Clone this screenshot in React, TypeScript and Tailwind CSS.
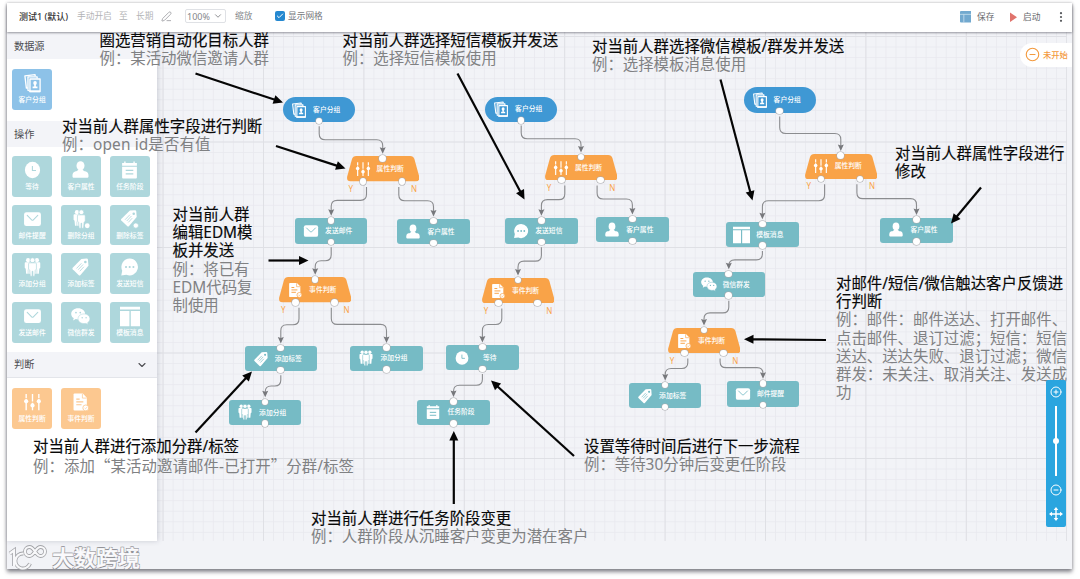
import React from "react";
import { ChevronDown, Check, PenLine, CirclePlus, CircleMinus } from "lucide-react";

type Kind = "pill" | "cond" | "act";
type IconName =
  | "group" | "sliders" | "mail" | "user" | "chat" | "event" | "tag" | "people"
  | "clock" | "task" | "template" | "wechat" | "peopleDel" | "tagDel";

function Person({ x, y, s = 1 }: { x: number; y: number; s?: number }) {
  return (
    <g transform={`translate(${x} ${y}) scale(${s})`}>
      <circle cx="0" cy="-6.300" r="2.200" />
      <path d="M-2.700 -4H2.700Q3.500 -3.800 3.500 -3V1.600L2.500 2.600L2 8H.3V3.500H-.3V8H-2L-2.500 2.600L-3.500 1.600V-3Q-3.500 -3.800 -2.700 -4Z" />
    </g>
  );
}

function Icon({ name, hole, className }: { name: IconName; hole: string; className: string }) {
  const shapes: Record<IconName, React.ReactNode> = {
    group: (
      <g fill="none" stroke="#fff" strokeWidth="1.250" strokeLinejoin="round">
        <path d="M4.600 13.600 3.200 13.800 1.800 2.200 11.400 1.100 11.600 2.400" />
        <path d="M6 16.200 4.700 15.900V3.200H13.400V4.800" />
        <rect x="6.600" y="5.200" width="9.600" height="11.900" />
        <path d="M6 16.800H16.200" strokeWidth="1.800" />
        <g fill="#fff" stroke="none">
          <ellipse cx="11.400" cy="9" rx="1.700" ry="1.900" />
          <path d="M10.600 10h1.600v2.200h1.500v1.700H9.100v-1.700h1.500z" />
        </g>
      </g>
    ),
    sliders: (
      <g>
        <path d="M3 1.400v3.800M3 6v10.800M9 1.400v7.200M9 9.600v7.200M15 1.400v3.800M15 6v10.800" stroke="#fff" strokeWidth="1.300" />
        <circle cx="3" cy="8.400" r="2" />
        <circle cx="9" cy="12.200" r="2" />
        <circle cx="15" cy="8.400" r="2" />
      </g>
    ),
    mail: (
      <g>
        <rect x="1" y="2.600" width="16" height="13" rx="2.200" />
        <path d="M4 5.600 8.400 10q.6.500 1.200 0L14 5.600" fill="none" stroke={hole} strokeWidth="1" strokeLinecap="round" />
      </g>
    ),
    user: (
      <g>
        <ellipse cx="9" cy="5" rx="3.800" ry="4.300" />
        <path d="M6.600 8.600h4.800c.2 1.400 1.300 1.500 2.800 1.900 1.800.6 2.400 2 2.400 4.200 0 1.400-.6 1.700-1.600 1.700H3c-1 0-1.600-.3-1.600-1.700 0-2.200.6-3.600 2.400-4.200 1.500-.4 2.600-.5 2.800-1.900z" />
      </g>
    ),
    chat: (
      <g>
        <path d="M9.200 1a7.800 8 0 1 1-3.200 15.300L1.200 17 2.100 12.500A7.800 8 0 0 1 9.200 1z" />
        <g fill={hole}><circle cx="5.700" cy="9" r="1" /><circle cx="9.200" cy="9" r="1" /><circle cx="12.700" cy="9" r="1" /></g>
      </g>
    ),
    event: (
      <g>
        <path d="M3.400 1h7.800l3.800 4v11a1 1 0 0 1-1 1H3.400a1 1 0 0 1-1-1V2a1 1 0 0 1 1-1z" />
        <path d="M10.800 1.300v4h4" fill="none" stroke={hole} strokeWidth="0.700" />
        <path d="M5 6.200h3.200M5 8.900h6.700M5 11.600h5" stroke={hole} strokeWidth="1.100" />
        <circle cx="14" cy="14.600" r="2.800" stroke={hole} strokeWidth="0.800" />
        <path d="M12.900 14.700l.9.8 1.400-1.700" fill="none" stroke={hole} strokeWidth="0.600" />
      </g>
    ),
    tag: (
      <g>
        <path d="M9.800 1.400 14.800 1Q16 1 16.100 2.200L16.500 7.800 8.800 16.800q-.7.600-1.400 0L1.600 11.200q-.6-.7 0-1.400z" />
        <circle cx="13.600" cy="4.300" r="1.200" fill={hole} />
        <path d="M5.200 10.400 9.900 5.500M6.800 11.600l4.700-5M8.300 13l3.900-4.200" stroke={hole} strokeWidth="0.750" />
      </g>
    ),
    people: (
      <g>
        <Person x={4.8} y={8.2} s={0.9} />
        <Person x={13.200} y={8.2} s={0.9} />
        <g stroke={hole} strokeWidth="0.600"><Person x={9} y={9.3} s={1.060} /></g>
      </g>
    ),
    clock: (
      <g>
        <ellipse cx="9" cy="9" rx="7.200" ry="7.700" />
        <path d="M8.900 5.200v4.200h3.400" fill="none" stroke={hole} strokeWidth="1" />
      </g>
    ),
    task: (
      <g>
        <path d="M2 5.900h14v10.200a.9.9 0 0 1-.9.9H2.900a.9.9 0 0 1-.9-.9z" />
        <path d="M2 4.900V2.400h2V1h1.300v1.400h7.400V1H14v1.400h2v2.500z" />
        <path d="M5.400 9.400h7.200M5.400 12.700h7.200" stroke={hole} strokeWidth="1.100" />
      </g>
    ),
    template: (
      <g>
        <path d="M0 .2h18v2.600H0zM0 4h8.500v13.800H0zM9.700 4H18v13.800H9.700z" />
      </g>
    ),
    wechat: (
      <g>
        <path d="M6.800 1.600C2.800 1.600.2 4 .2 7c0 1.800 1 3.100 2.400 4l-.6 2.200 2.500-1.300c.8.200 1.500.3 2.300.3 3.800 0 6.600-2.300 6.600-5.200S10.600 1.600 6.800 1.600z" />
        <path d="M12.400 7c-3.300 0-5.700 2-5.700 4.500s2.400 4.700 5.700 4.700c.6 0 1.200-.1 1.800-.2l2 1.100-.5-1.700c1.300-.8 2.200-2.200 2.200-3.900C17.900 9 15.600 7 12.400 7z" stroke={hole} strokeWidth="0.500" />
        <g fill={hole}><circle cx="4.700" cy="5.800" r=".8" /><circle cx="8.800" cy="5.800" r=".8" /><circle cx="10.600" cy="10.600" r=".7" /><circle cx="14.300" cy="10.600" r=".7" /></g>
      </g>
    ),
    peopleDel: (
      <g>
        <Person x={5.6} y={8.2} s={0.9} />
        <g stroke={hole} strokeWidth="0.600"><Person x={9.8} y={9.3} s={1.060} /></g>
        <circle cx="15.400" cy="15.400" r="2.300" />
      </g>
    ),
    tagDel: (
      <g>
        <path d="M9.400 1 14.200.7Q15.300.7 15.400 1.800L15.800 7.200 8.400 15.800q-.7.600-1.400 0L1.200 10.400q-.6-.7 0-1.400z" />
        <circle cx="13" cy="4" r="1.200" fill={hole} />
        <path d="M4.800 9.700 9.400 4.900M6.400 10.900l4.500-4.800M7.900 12.200l3.700-4" stroke={hole} strokeWidth="0.750" />
        <circle cx="15" cy="15.200" r="2.500" stroke={hole} strokeWidth="0.700" />
      </g>
    ),
  };
  return (
    <svg viewBox="0 0 18 18" fill="#fff" className={className}>
      {shapes[name]}
    </svg>
  );
}

type NodeData = { x: number; y: number; kind: Kind; icon: IconName; label: string };

const nodes: Record<string, NodeData> = {
  a1: { x: 283, y: 97.2, kind: "pill", icon: "group", label: "客户分组" },
  a2: { x: 346.5, y: 156.4, kind: "cond", icon: "sliders", label: "属性判断" },
  a3: { x: 295, y: 218.3, kind: "act", icon: "mail", label: "发送邮件" },
  a4: { x: 397.3, y: 219.2, kind: "act", icon: "user", label: "客户属性" },
  a5: { x: 279, y: 277.3, kind: "cond", icon: "event", label: "事件判断" },
  a6: { x: 244.6, y: 346.2, kind: "act", icon: "tag", label: "添加标签" },
  a7: { x: 350.3, y: 345.5, kind: "act", icon: "people", label: "添加分组" },
  a8: { x: 229, y: 399.8, kind: "act", icon: "people", label: "添加分组" },
  b1: { x: 485, y: 96.5, kind: "pill", icon: "group", label: "客户分组" },
  b2: { x: 544.8, y: 155, kind: "cond", icon: "sliders", label: "属性判断" },
  b3: { x: 505.2, y: 218.3, kind: "act", icon: "chat", label: "发送短信" },
  b4: { x: 596.2, y: 217, kind: "act", icon: "user", label: "客户属性" },
  b5: { x: 481.8, y: 278, kind: "cond", icon: "event", label: "事件判断" },
  b6: { x: 446.2, y: 345, kind: "act", icon: "clock", label: "等待" },
  b7: { x: 417.3, y: 399.6, kind: "act", icon: "task", label: "任务阶段" },
  c1: { x: 743.5, y: 87.4, kind: "pill", icon: "group", label: "客户分组" },
  c2: { x: 804.6, y: 153.7, kind: "cond", icon: "sliders", label: "属性判断" },
  c3: { x: 726.2, y: 221.9, kind: "act", icon: "template", label: "模板消息" },
  c4: { x: 880.3, y: 217.6, kind: "act", icon: "user", label: "客户属性" },
  c5: { x: 692.6, y: 271.8, kind: "act", icon: "wechat", label: "微信群发" },
  c6: { x: 667.8, y: 328, kind: "cond", icon: "event", label: "事件判断" },
  c7: { x: 629, y: 383, kind: "act", icon: "tag", label: "添加标签" },
  c8: { x: 726.8, y: 381.3, kind: "act", icon: "mail", label: "邮件提醒" },
};

const edges: [string, string, ("Y" | "N")?][] = [
  ["a1", "a2"], ["a2", "a3", "Y"], ["a2", "a4", "N"], ["a3", "a5"],
  ["a5", "a6", "Y"], ["a5", "a7", "N"], ["a6", "a8"],
  ["b1", "b2"], ["b2", "b3", "Y"], ["b2", "b4", "N"], ["b3", "b5"], ["b5", "b6", "Y"], ["b6", "b7"],
  ["c1", "c2"], ["c2", "c3", "Y"], ["c2", "c4", "N"], ["c3", "c5"], ["c5", "c6"],
  ["c6", "c7", "Y"], ["c6", "c8", "N"],
];

function Edge({ from, to, branch }: { from: NodeData; to: NodeData; branch?: "Y" | "N" }) {
  const sx = from.x + (branch === "Y" ? 20 : branch === "N" ? 52.3 : 36.2);
  const py = from.y + 24;
  const sy = branch ? from.y + 30.5 : py + 5;
  const tx = to.x + 36.2;
  const ty = to.y - 2.6;
  const my = (py + to.y + 2) / 2;
  const d = tx > sx ? 1 : -1;
  const r = Math.min(6, (ty - sy) / 2);
  return (
    <g>
      <path
        d={`M${sx} ${sy}V${my - r}Q${sx} ${my} ${sx + r * d} ${my}H${tx - r * d}Q${tx} ${my} ${tx} ${my + r}V${ty - 3}`}
        fill="none" stroke="#8b8c8f" strokeWidth="1.1"
      />
      <path d={`M${tx} ${ty}L${tx - 3} ${ty - 6.5}L${tx} ${ty - 5.5}L${tx + 3} ${ty - 6.5}Z`} fill="#77787c" />
    </g>
  );
}

const kindColor: Record<Kind, string> = { pill: "#3f98d4", cond: "#f9a348", act: "#76bbc5" };

function Port({ className }: { className: string }) {
  return <span className={`absolute size-[6.600px] rounded-full bg-white shadow-[0_0_0_0.6px_#a9aaad] ${className}`} />;
}

function FlowNode({ node }: { node: NodeData }) {
  const bg = node.kind === "pill" ? "rounded-full bg-[#3f98d4]" : node.kind === "act" ? "rounded-[3px] bg-[#76bbc5]" : "";
  return (
    <div
      className={`absolute flex h-[25.300px] w-[72.400px] items-center ${bg}`}
      style={{ left: node.x, top: node.y }}
    >
      {node.kind === "cond" && (
        <svg viewBox="0 0 72.4 25.3" className="absolute inset-0 h-full w-full">
          <path d="M9.200 0H63.200Q66.400 0 67.400 3L72.200 20.500Q73 25.300 69 25.300H3.400Q-.6 25.300.2 20.500L5 3Q6 0 9.200 0Z" fill="#f9a348" />
        </svg>
      )}
      <Icon
        name={node.icon}
        hole={kindColor[node.kind]}
        className={node.icon === "template" ? "relative ml-[7px] h-[18px] w-[17px]" : "relative ml-2 size-4"}
      />
      <span className="relative flex-1 whitespace-nowrap pl-[3px] pr-3 pt-px text-center text-[6.800px] font-medium leading-none text-white">
        {node.label}
      </span>
      {node.kind !== "pill" && <Port className="left-[32.900px] -top-[1.300px]" />}
      {node.kind === "cond" ? (
        <>
          <Port className="left-[13.200px] top-[21.900px]" />
          <Port className="left-[52.200px] top-[21.900px]" />
          <span className="absolute left-[2px] top-[27.500px] text-[8px] leading-[9px] text-[#f9a348]">Y</span>
          <span className="absolute left-[64.500px] top-[27.500px] text-[8px] leading-[9px] text-[#f9a348]">N</span>
        </>
      ) : (
        <Port className="left-[32.900px] top-[20.500px]" />
      )}
    </div>
  );
}

const tileColor = { blue: "bg-[#8dc2e8]", teal: "bg-[#aed7dc]", orange: "bg-[#fcc890]" };
const tileHole = { blue: "#8dc2e8", teal: "#aed7dc", orange: "#fcc890" };

function Tile({ icon, label, tone }: { icon: IconName; label: string; tone: "blue" | "teal" | "orange" }) {
  return (
    <div className={`flex h-[40.700px] w-[40.200px] flex-col items-center rounded-[3px] pt-1 ${tileColor[tone]}`}>
      <Icon name={icon} hole={tileHole[tone]} className={icon === "template" ? "h-[21px] w-5" : "h-[20px] w-[19px]"} />
      <span className={`whitespace-nowrap text-[6.800px] font-medium leading-[8px] text-white ${icon === "template" ? "mt-[2px]" : "mt-[3px]"}`}>{label}</span>
    </div>
  );
}

function SectionHead({ title, className, arrow }: { title: string; className: string; arrow?: boolean }) {
  return (
    <div className={`flex items-center justify-between bg-[#f3f4f8] px-[7px] text-[10.200px] text-[#4d4e52] ${className}`}>
      <span>{title}</span>
      {arrow && <ChevronDown className="mr-[2px] size-3" strokeWidth={2.200} />}
    </div>
  );
}

const actions: [IconName, string][] = [
  ["clock", "等待"], ["user", "客户属性"], ["task", "任务阶段"],
  ["mail", "邮件提醒"], ["peopleDel", "删除分组"], ["tagDel", "删除标签"],
  ["people", "添加分组"], ["tag", "添加标签"], ["chat", "发送短信"],
  ["mail", "发送邮件"], ["wechat", "微信群发"], ["template", "模板消息"],
];

function Sidebar() {
  return (
    <aside className="relative flex h-[509px] w-[149.500px] shrink-0 flex-col bg-white shadow-[1px_0_5px_rgba(60,65,90,0.22)]">
      <SectionHead title="数据源" className="h-[27px] pt-[2px]" />
      <div className="px-[5px] pb-[11px] pt-[10px]">
        <Tile icon="group" label="客户分组" tone="blue" />
      </div>
      <SectionHead title="操作" className="h-[26.500px] pt-px" />
      <div className="grid grid-cols-[repeat(3,40.200px)] gap-x-[8.700px] gap-y-[7.900px] px-[5px] pb-[9.500px] pt-[9px]">
        {actions.map(([icon, label]) => (
          <Tile key={label} icon={icon} label={label} tone="teal" />
        ))}
      </div>
      <SectionHead title="判断" className="h-[26px] border-b border-[#e3e5ea] pt-px" arrow />
      <div className="flex gap-[8.700px] px-[5px] pt-[10px]">
        <Tile icon="sliders" label="属性判断" tone="orange" />
        <Tile icon="event" label="事件判断" tone="orange" />
      </div>
    </aside>
  );
}

function Toolbar() {
  return (
    <header className="relative z-10 flex h-[29px] shrink-0 items-center bg-white pb-[3px] text-[8.700px] leading-none text-[#9b9da1] shadow-[0_1px_2px_rgba(70,70,80,0.55)]">
      <span className="ml-[12px] w-[58px] whitespace-nowrap text-[9px] font-medium text-[#333]">测试1 (默认)</span>
      <span className="w-[42px] text-[#b3b4b6]">手动开启</span>
      <span className="w-[17px] text-[#b3b4b6]">至</span>
      <span className="w-[24px] text-[#b3b4b6]">长期</span>
      <PenLine className="ml-px size-[11px]" strokeWidth={1.800} />
      <span className="ml-[13px] flex h-[14px] w-[41px] items-center justify-between rounded-[2px] border border-[#dfe1e5] pl-px pr-[2px] text-[9px] text-[#85878b]">
        100%
        <ChevronDown className="size-[10px]" strokeWidth={2.200} />
      </span>
      <span className="ml-[9px] w-[40px] text-[#85878b]">缩放</span>
      <span className="flex size-[10px] items-center justify-center rounded-[2px] bg-[#2588d0]">
        <Check className="size-2 text-white" strokeWidth={3} />
      </span>
      <span className="ml-[3px] text-[#77797d]">显示网格</span>
      <span className="ml-auto flex items-center pt-[2px] text-[#66686c]">
        <svg viewBox="0 0 12 12" className="size-[11.500px]">
          <rect width="12" height="12" rx="1" fill="#72a9cf" />
          <path d="M0 3.500H12M4 3.500V12" stroke="#cfe3f1" strokeWidth=".8" />
        </svg>
        <span className="ml-[6px] w-[33px]">保存</span>
        <svg viewBox="0 0 8 11" className="h-[10.500px] w-[7px]"><path d="M0 0 8 5.500 0 11Z" fill="#e0736c" /></svg>
        <span className="ml-[6px] w-[36px]">启动</span>
        <svg viewBox="0 0 4 10" className="mr-[8.500px] h-[10px] w-1" fill="#55575b">
          <circle cx="2" cy="1.200" r="1.100" /><circle cx="2" cy="5" r="1.100" /><circle cx="2" cy="8.800" r="1.100" />
        </svg>
      </span>
    </header>
  );
}

function Grid() {
  return (
    <svg className="h-full w-full">
      <defs>
        <pattern id="minor" x="5.6" y="4" width="10.04" height="10.55" patternUnits="userSpaceOnUse">
          <path d="M.4 0V10.550M0 .4H10.040" stroke="#e7e8ed" strokeWidth=".8" fill="none" />
        </pattern>
        <pattern id="major" x="5.6" y="4" width="100.4" height="105.5" patternUnits="userSpaceOnUse">
          <path d="M.5 0V105.500M0 .5H100.400" stroke="#dfe0e5" strokeWidth="1" fill="none" />
        </pattern>
      </defs>
      <rect width="100%" height="100%" fill="url(#minor)" />
      <rect width="100%" height="100%" fill="url(#major)" />
    </svg>
  );
}

const arrows: [number, number, number, number][] = [
  [195.5, 73.5, 283, 102.5],
  [276, 146, 345.5, 168.5],
  [268.5, 260.5, 308.5, 260.5],
  [195.5, 432.5, 252, 371.5],
  [453.8, 504, 453.8, 431],
  [574, 456, 491, 380.5],
  [457.5, 73.5, 524.5, 199.5],
  [720.5, 79.5, 752.5, 200.5],
  [826, 340, 744, 339.2],
  [981, 187.5, 951, 223.5],
];

function Pointer({ p }: { p: [number, number, number, number] }) {
  const [x1, y1, x2, y2] = p;
  const len = Math.hypot(x2 - x1, y2 - y1);
  const ux = (x2 - x1) / len;
  const uy = (y2 - y1) / len;
  const bx = x2 - ux * 9.5;
  const by = y2 - uy * 9.5;
  return (
    <g>
      <path d={`M${x1} ${y1}L${bx + ux} ${by + uy}`} stroke="#050505" strokeWidth="2.200" />
      <path d={`M${x2} ${y2}L${bx - uy * 4.5} ${by + ux * 4.5}L${bx + uy * 4.5} ${by - ux * 4.5}Z`} fill="#050505" />
    </g>
  );
}

function Note({ className, title, body }: { className: string; title: string[]; body?: React.ReactNode[] }) {
  return (
    <div className={`absolute whitespace-nowrap text-[15.420px] leading-[18.200px] ${className}`}>
      {title.map((t) => <p key={t} className="text-[#080808] [-webkit-text-stroke:0.150px_#080808]">{t}</p>)}
      {body?.map((t, i) => <p key={i} className="text-[#808183]">{t}</p>)}
    </div>
  );
}

function ZoomPanel() {
  return (
    <div className="absolute left-[1046px] top-[380px] flex h-[147px] w-5 flex-col items-center rounded-[2px] bg-[#2aa5df] text-white">
      <CirclePlus className="mt-[5.500px] size-3" strokeWidth={2} />
      <div className="mt-[8.500px] flex h-[70px] w-[2px] items-center justify-center bg-white">
        <span className="size-[6px] shrink-0 rounded-full bg-white" />
      </div>
      <CircleMinus className="mt-2 size-3" strokeWidth={2} />
      <svg viewBox="0 0 14 14" className="mt-[11px] size-[14px]" fill="#fff">
        <path d="M7 2V12M2 7H12" stroke="#fff" strokeWidth="1.400" />
        <path d="M7 0 9.300 3H4.700ZM7 14 4.700 11H9.300ZM0 7 3 4.700V9.300ZM14 7 11 9.300V4.700Z" />
      </svg>
    </div>
  );
}

function Watermark() {
  const logo = (
    <>
      <path d="M1.800 9.500 6 6.500V22" />
      <path d="M22 19.500A7.500 7.500 0 1 1 15.500 9.500" />
      <path d="M27 7.500C25 4.500 23.500 3 21.500 3a4.500 4.500 0 1 0 0 9c2 0 3.500-1.500 5.500-4.500s3.500-4.500 5.500-4.500a4.500 4.500 0 1 1 0 9c-2 0-3.500-1.500-5.500-4.500z" />
    </>
  );
  return (
    <div className="absolute left-[8px] top-[544px] flex items-center">
      <svg viewBox="0 0 40 26" className="h-[26px] w-10" fill="none">
        <g stroke="#a3a4a8" strokeWidth="3.800">{logo}</g>
        <g stroke="#f8f8fa" strokeWidth="2.200">{logo}</g>
      </svg>
      <span className="ml-[4px] text-[22px] font-medium leading-[26px] text-[#fafafc] [text-shadow:0.8px_0.8px_0.6px_#909196,-0.8px_-0.8px_0.6px_#909196,0.8px_-0.8px_0.6px_#909196,-0.8px_0.8px_0.6px_#909196] [-webkit-text-stroke:0.500px_#fafafc]">
        大数跨境
      </span>
    </div>
  );
}

export default function App() {
  return (
    <div lang="zh-CN" className="relative h-[579px] w-[1080px] overflow-hidden bg-white pl-[7px] pt-[3px] font-['Noto_Sans','Noto_Sans_CJK_SC',sans-serif]">
      <div className="flex h-[565.500px] w-[1064.500px] flex-col bg-[#f2f3f7] shadow-[0_3px_4px_rgba(60,60,70,0.6),0_0_3px_rgba(90,90,100,0.3)]">
        <Toolbar />
        <main className="flex h-[509px]">
          <Sidebar />
          <div className="h-[509px] w-[910.500px]"><Grid /></div>
        </main>
      </div>

      <svg viewBox="0 0 1080 579" className="absolute inset-0 h-full w-full">
        {edges.map(([a, b, branch]) => <Edge key={a + b} from={nodes[a]} to={nodes[b]} branch={branch} />)}
      </svg>
      {Object.entries(nodes).map(([id, n]) => <FlowNode key={id} node={n} />)}

      <div className="absolute left-[1020px] top-[42.500px] flex h-6 w-[51.500px] items-center rounded-l-full bg-white pl-[5px] text-[8.300px] font-medium text-[#f39a3e]">
        <CircleMinus className="size-[15px]" strokeWidth={1.800} />
        <span className="ml-[3px] whitespace-nowrap pt-px">未开始</span>
      </div>

      <Note className="left-[99.500px] top-[31.500px]" title={["圈选营销自动化目标人群"]} body={["例：某活动微信邀请人群"]} />
      <Note className="left-[342.500px] top-[32px]" title={["对当前人群选择短信模板并发送"]} body={["例：选择短信模板使用"]} />
      <Note className="left-[592px] top-[37.500px]" title={["对当前人群选择微信模板/群发并发送"]} body={["例：选择模板消息使用"]} />
      <Note className="left-[62px] top-[117.500px]" title={["对当前人群属性字段进行判断"]} body={[<span key="b" className="tracking-[0.12px]">例：open id是否有值</span>]} />
      <Note className="left-[895px] top-[144.500px]" title={["对当前人群属性字段进行", "修改"]} />
      <Note className="left-[172.500px] top-[206px]" title={["对当前人群", "编辑EDM模", "板并发送"]} body={["例：将已有", "EDM代码复", "制使用"]} />
      <Note
        className="left-[836px] top-[275px]"
        title={["对邮件/短信/微信触达客户反馈进", "行判断"]}
        body={["例：邮件：邮件送达、打开邮件、", "点击邮件、退订过滤；短信：短信", "送达、送达失败、退订过滤；微信", "群发：未关注、取消关注、发送成", "功"]}
      />
      <Note
        className="left-[33px] top-[438px]"
        title={["对当前人群进行添加分群/标签"]}
        body={[
          <span key="q" className="tracking-[0.1px]">
            例：添加<span className="font-['Noto_Sans_CJK_SC',sans-serif]">“</span>某活动邀请邮件-已打开<span className="font-['Noto_Sans_CJK_SC',sans-serif]">”</span>分群/标签
          </span>,
        ]}
      />
      <Note className="left-[311px] top-[510px]" title={["对当前人群进行任务阶段变更"]} body={["例：人群阶段从沉睡客户变更为潜在客户"]} />
      <Note className="left-[584px] top-[438px]" title={["设置等待时间后进行下一步流程"]} body={["例：等待30分钟后变更任阶段"]} />

      <svg viewBox="0 0 1080 579" className="absolute inset-0 h-full w-full">
        {arrows.map((p) => <Pointer key={p.join()} p={p} />)}
      </svg>
      <ZoomPanel />
      <Watermark />
    </div>
  );
}
